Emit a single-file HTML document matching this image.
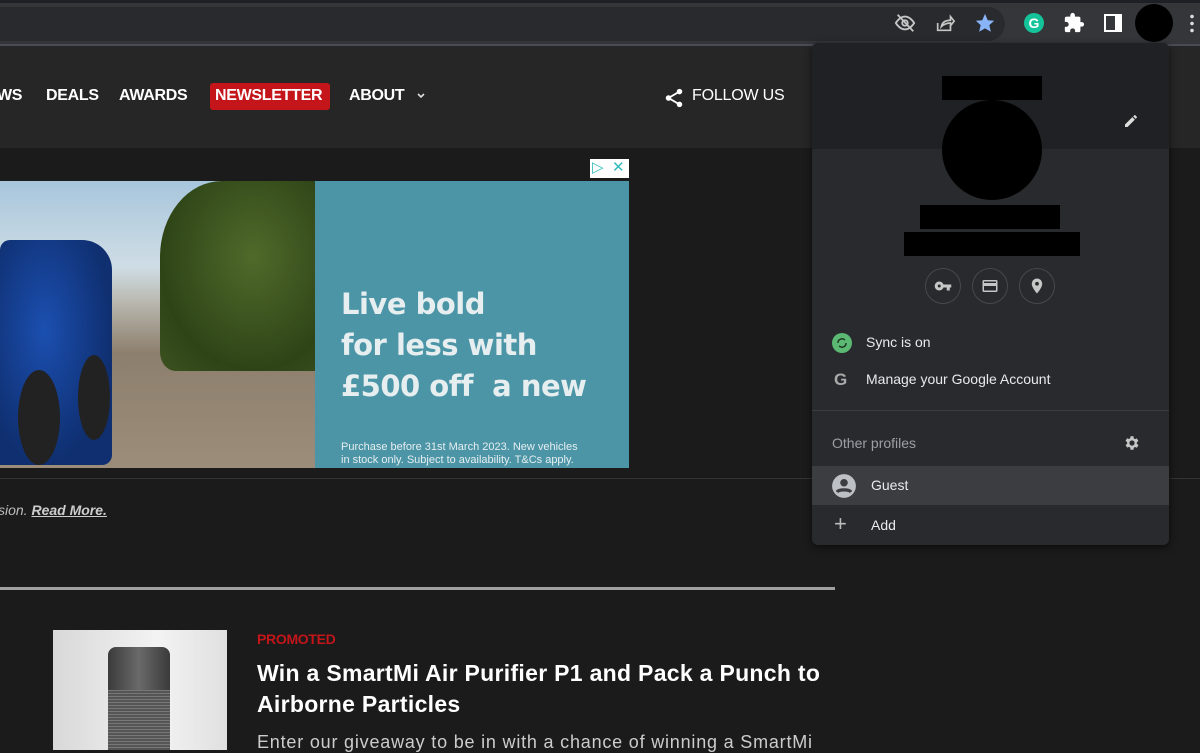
<!DOCTYPE html>
<html><head><meta charset="utf-8"><style>
*{margin:0;padding:0;box-sizing:border-box}
body{width:1200px;height:750px;overflow:hidden;background:#1b1b1b;font-family:"Liberation Sans",sans-serif;position:relative}
.abs{position:absolute}
.nav{font-family:"Liberation Sans",sans-serif;font-weight:bold;font-size:16px;color:#fff;letter-spacing:-0.3px;top:87px}
.pop{left:812px;top:43px;width:357px;height:502px;background:#292a2d;border-radius:6px;overflow:hidden;box-shadow:0 2px 8px rgba(0,0,0,.6)}
.pt{font-size:14px;color:#e8eaed}
.circ{width:36px;height:36px;border:1px solid #46484c;border-radius:50%;top:268px;display:flex;align-items:center;justify-content:center}
</style></head><body>
<div class="abs" style="left:0;top:0;width:1200px;height:45px;background:#35363a"></div>
<div class="abs" style="left:0;top:0;width:1200px;height:3px;background:#1f2025"></div>
<div class="abs" style="left:0;top:7px;width:1005px;height:34px;background:#292a2d;border-radius:0 17px 17px 0"></div>
<div class="abs" style="left:0;top:44px;width:1200px;height:2px;background:#4a4c55"></div>
<svg class="abs" style="left:894px;top:12px" width="22" height="22" viewBox="0 0 24 24" fill="none" stroke="#c4c7c5" stroke-width="2"><path d="M2 12s4-7 10-7 10 7 10 7-4 7-10 7S2 12 2 12z"/><circle cx="12" cy="12" r="3"/><path d="M4 3l17 18"/></svg>
<svg class="abs" style="left:934px;top:12px" width="22" height="22" viewBox="0 0 24 24" fill="none" stroke="#c4c7c5" stroke-width="1.8"><path d="M4 12v8h14v-5"/><path d="M8 16c1-5 5-7 10-7V5l4 5-4 5v-3c-4 0-7 1-10 4z"/></svg>
<svg class="abs" style="left:974px;top:12px" width="22" height="22" viewBox="0 0 24 24"><path fill="#8ab4f8" d="M12 2l3 7 7 .6-5.3 4.7 1.7 7.2L12 17.8 5.6 21.5l1.7-7.2L2 9.6 9 9z"/></svg>
<div class="abs" style="left:1024px;top:13px;width:20px;height:20px;border-radius:50%;background:#15c39a;color:#fff;font-weight:bold;font-size:14px;text-align:center;line-height:20px">G</div>
<svg class="abs" style="left:1063px;top:12px" width="22" height="22" viewBox="0 0 24 24"><path fill="#fff" d="M20.5 11H19V7a2 2 0 0 0-2-2h-4V3.5a2.5 2.5 0 0 0-5 0V5H4a2 2 0 0 0-2 2v3.8h1.5a2.7 2.7 0 0 1 0 5.4H2V20a2 2 0 0 0 2 2h3.8v-1.5a2.7 2.7 0 0 1 5.4 0V22H17a2 2 0 0 0 2-2v-4h1.5a2.5 2.5 0 0 0 0-5z"/></svg>
<div class="abs" style="left:1104px;top:14px;width:18px;height:18px;border:2px solid #fff;border-right-width:7px"></div>
<div class="abs" style="left:1135px;top:4px;width:38px;height:38px;border-radius:50%;background:#000"></div>
<div class="abs" style="left:1190px;top:13px;width:4px;height:20px;background:radial-gradient(circle,#ddd 1.6px,transparent 2px) 0 0/4px 7px"></div>
<div class="abs" style="left:0;top:46px;width:1200px;height:102px;background:#262626"></div>
<div class="abs nav" style="left:-3px">WS</div>
<div class="abs nav" style="left:46px">DEALS</div>
<div class="abs nav" style="left:119px">AWARDS</div>
<div class="abs" style="left:210px;top:83px;width:120px;height:27px;background:#c3151a;border-radius:3px"></div>
<div class="abs nav" style="left:215px">NEWSLETTER</div>
<div class="abs nav" style="left:349px">ABOUT</div>
<svg class="abs" style="left:415px;top:90px" width="12" height="12" viewBox="0 0 12 12" fill="none" stroke="#ddd" stroke-width="1.6"><path d="M3 4l3 3 3-3"/></svg>
<svg class="abs" style="left:663px;top:87px" width="22" height="22" viewBox="0 0 24 24" fill="#fff"><circle cx="18" cy="5" r="3"/><circle cx="6" cy="12" r="3"/><circle cx="18" cy="19" r="3"/><path d="M6 12L18 5M6 12l12 7" stroke="#fff" stroke-width="2"/></svg>
<div class="abs" style="left:692px;top:87px;font-size:16px;color:#fff;letter-spacing:-0.2px">FOLLOW US</div>
<div class="abs" style="left:590px;top:159px;width:39px;height:19px;background:#fff"></div>
<div class="abs" style="left:592px;top:158px;font-size:15px;color:#3bb;">▷</div>
<div class="abs" style="left:612px;top:158px;font-size:15px;color:#3bb;">✕</div>
<div class="abs" style="left:0;top:181px;width:315px;height:287px;background:linear-gradient(#a7c6dc 0,#cfdde5 30%,#b9b9b0 42%,#8d7f6d 60%,#9b8d79 100%)"></div>
<div class="abs" style="left:160px;top:181px;width:155px;height:190px;background:radial-gradient(ellipse at 60% 40%,#4f6a2a,#2e4417 70%,#3d5220);border-radius:40% 0 0 10%"></div>
<div class="abs" style="left:0;top:240px;width:112px;height:225px;background:radial-gradient(ellipse at 40% 40%,#1b4fb0,#0f2f70 70%);border-radius:10px 30px 10px 0"></div>
<div class="abs" style="left:18px;top:370px;width:42px;height:95px;border-radius:50%;background:#222"></div>
<div class="abs" style="left:78px;top:355px;width:32px;height:85px;border-radius:50%;background:#222"></div>
<div class="abs" style="left:315px;top:181px;width:314px;height:287px;background:#4b95a6"></div>
<div class="abs" style="left:341px;top:284px;font-family:'DejaVu Sans',sans-serif;font-weight:bold;font-size:29px;line-height:41px;color:#e6eef0;letter-spacing:-0.5px">Live bold<br>for less with<br>£500 off&nbsp; a new</div>
<div class="abs" style="left:341px;top:441px;font-size:11px;line-height:13px;color:#e6eef0">Purchase before 31st March 2023. New vehicles<br>in stock only. Subject to availability. T&amp;Cs apply.</div>
<div class="abs" style="left:0;top:478px;width:1200px;height:1px;background:#333"></div>
<div class="abs" style="left:-2px;top:502px;font-size:14px;font-style:italic;color:#bbb">sion. <b style="text-decoration:underline;color:#ccc">Read More.</b></div>
<div class="abs" style="left:0;top:587px;width:835px;height:3px;background:#a0a0a0"></div>
<div class="abs" style="left:53px;top:630px;width:174px;height:120px;background:linear-gradient(90deg,#d8d8d8,#f3f3f3 60%,#e0e0e0)"></div>
<div class="abs" style="left:108px;top:647px;width:62px;height:103px;border-radius:8px 8px 0 0;background:linear-gradient(90deg,#3b3b3b,#6a6a6a 50%,#3a3a3a)"></div>
<div class="abs" style="left:108px;top:690px;width:62px;height:60px;background:repeating-linear-gradient(#777 0 1px,#555 1px 3px)"></div>
<div class="abs" style="left:257px;top:631px;font-size:14px;font-weight:bold;color:#c3151a;letter-spacing:-0.3px">PROMOTED</div>
<div class="abs" style="left:257px;top:658px;font-size:23px;font-weight:bold;color:#fff;line-height:31px;letter-spacing:0.3px">Win a SmartMi Air Purifier P1 and Pack a Punch to<br>Airborne Particles</div>
<div class="abs" style="left:257px;top:732px;font-size:18px;color:#ccc;letter-spacing:0.8px">Enter our giveaway to be in with a chance of winning a SmartMi</div>
<div class="abs pop">
 <div class="abs" style="left:0;top:0;width:357px;height:106px;background:#202124"></div>
 <div class="abs" style="left:130px;top:33px;width:100px;height:24px;background:#000"></div>
 <div class="abs" style="left:130px;top:57px;width:100px;height:100px;border-radius:50%;background:#000"></div>
 <div class="abs" style="left:108px;top:162px;width:140px;height:24px;background:#000"></div>
 <div class="abs" style="left:92px;top:189px;width:176px;height:24px;background:#000"></div>
 <svg class="abs" style="left:311px;top:70px" width="16" height="16" viewBox="0 0 24 24"><path fill="#ddd" d="M3 17.2V21h3.8L17.8 10 14 6.2zM20.7 7a1 1 0 0 0 0-1.4l-2.3-2.3a1 1 0 0 0-1.4 0l-1.8 1.8 3.8 3.8z"/></svg>
 <div class="abs circ" style="left:113px;top:225px"><svg width="18" height="18" viewBox="0 0 24 24"><path fill="#c4c7c5" d="M12.6 10A6 6 0 1 0 12.6 14H17v4h4v-4h2v-4zM7 14a2 2 0 1 1 0-4 2 2 0 0 1 0 4z"/></svg></div>
 <div class="abs circ" style="left:160px;top:225px"><svg width="18" height="18" viewBox="0 0 24 24"><path fill="#c4c7c5" d="M20 4H4a2 2 0 0 0-2 2v12a2 2 0 0 0 2 2h16a2 2 0 0 0 2-2V6a2 2 0 0 0-2-2zm0 14H4v-6h16zm0-10H4V6h16z"/></svg></div>
 <div class="abs circ" style="left:207px;top:225px"><svg width="18" height="18" viewBox="0 0 24 24"><path fill="#c4c7c5" d="M12 2a7 7 0 0 0-7 7c0 5.2 7 13 7 13s7-7.8 7-13a7 7 0 0 0-7-7zm0 9.5A2.5 2.5 0 1 1 12 6.5a2.5 2.5 0 0 1 0 5z"/></svg></div>
 <div class="abs" style="left:20px;top:290px;width:20px;height:20px;border-radius:50%;background:#5bb974"></div>
 <svg class="abs" style="left:23px;top:293px" width="14" height="14" viewBox="0 0 24 24" fill="none" stroke="#1e3a24" stroke-width="2.5"><path d="M5 12a7 7 0 0 1 12-5M19 12a7 7 0 0 1-12 5"/></svg>
 <div class="abs pt" style="left:54px;top:291px">Sync is on</div>
 <div class="abs" style="left:22px;top:327px;font-size:17px;font-weight:bold;color:#aaa">G</div>
 <div class="abs pt" style="left:54px;top:328px">Manage your Google Account</div>
 <div class="abs" style="left:0;top:367px;width:357px;height:1px;background:#3c3d41"></div>
 <div class="abs" style="left:20px;top:392px;font-size:14px;color:#9aa0a6">Other profiles</div>
 <svg class="abs" style="left:311px;top:391px" width="18" height="18" viewBox="0 0 24 24"><path fill="#c4c7c5" d="M19.4 13a7.5 7.5 0 0 0 0-2l2.1-1.6-2-3.5-2.5 1a7 7 0 0 0-1.7-1L15 3h-4l-.4 2.6a7 7 0 0 0-1.7 1l-2.5-1-2 3.5L6.6 11a7.5 7.5 0 0 0 0 2l-2.1 1.6 2 3.5 2.5-1a7 7 0 0 0 1.7 1L11 21h4l.4-2.6a7 7 0 0 0 1.7-1l2.5 1 2-3.5zM13 15.5a3.5 3.5 0 1 1 0-7 3.5 3.5 0 0 1 0 7z" transform="translate(-1 0)"/></svg>
 <div class="abs" style="left:0;top:423px;width:357px;height:39px;background:#3c3d41"></div>
 <svg class="abs" style="left:19px;top:430px" width="26" height="26" viewBox="0 0 24 24"><circle cx="12" cy="12" r="11" fill="#bdc1c6"/><circle cx="12" cy="9" r="3.5" fill="#3c3d41"/><path d="M5.5 17.5c2-2.5 11-2.5 13 0" stroke="#3c3d41" stroke-width="3" fill="none"/></svg>
 <div class="abs pt" style="left:59px;top:434px">Guest</div>
 <div class="abs" style="left:22px;top:469px;font-size:22px;color:#bbb;line-height:24px">+</div>
 <div class="abs pt" style="left:59px;top:474px">Add</div>
</div>
</body></html>
